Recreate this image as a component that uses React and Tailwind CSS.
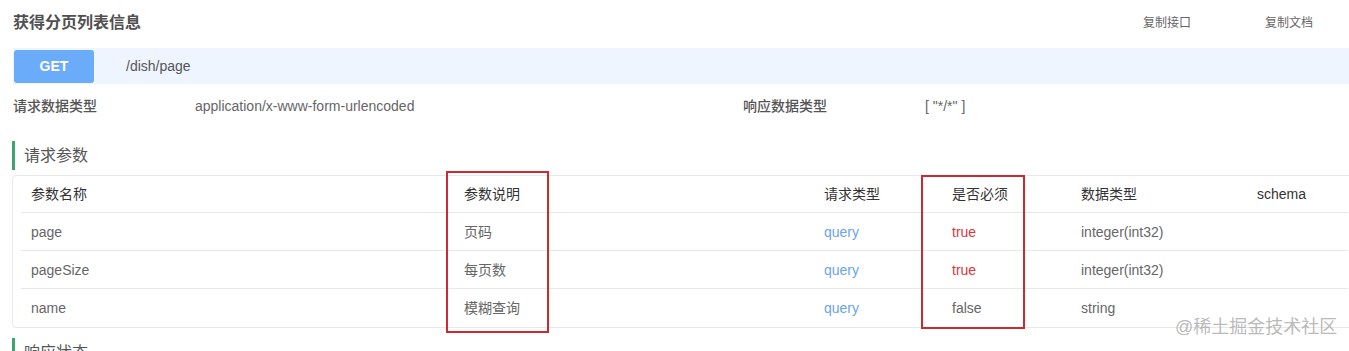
import React from 'react';

const params = [
  { name: 'page', desc: '页码', in: 'query', required: true, type: 'integer(int32)' },
  { name: 'pageSize', desc: '每页数', in: 'query', required: true, type: 'integer(int32)' },
  { name: 'name', desc: '模糊查询', in: 'query', required: false, type: 'string' },
];

const cols = 'grid grid-cols-[433px_360px_128px_129px_176px_1fr] items-center';

const SectionTitle = ({ children, className = '' }) => (
  <div className={`flex items-center gap-[9px] ${className}`}>
    <div className="w-[3px] h-[29px] bg-[#3fa56f]" />
    <span className="text-[16px] text-[#555]">{children}</span>
  </div>
);

export default function App() {
  return (
    <div
      className="relative w-[1349px] h-[351px] overflow-hidden bg-white"
      style={{ fontFamily: '"Liberation Sans", "Noto Sans CJK SC", sans-serif' }}
    >
      <div className="pl-[12px]">
        {/* Title row */}
        <div className="h-[48px] flex items-center pl-px pb-[2px]">
          <h1 className="text-[16px] font-bold text-[#505050]">获得分页列表信息</h1>
          <div className="ml-auto mr-[36px] flex gap-[74px] text-[12px] text-[#666]">
            <span>复制接口</span>
            <span>复制文档</span>
          </div>
        </div>

        {/* Method bar */}
        <div className="h-[36px] ml-px bg-[#eef5fe] flex items-center pl-px">
          <div className="w-[80px] h-[33px] mt-[1px] rounded-[3px] bg-[#6aabfa] flex items-center justify-center text-white font-bold text-[14px]">
            GET
          </div>
          <span className="ml-[32px] text-[14px] text-[#555]">/dish/page</span>
        </div>

        {/* Content types */}
        <div className="h-[44px] pl-px grid grid-cols-[182px_548px_182px_1fr] items-center text-[14px]">
          <span className="font-medium text-[#555]">请求数据类型</span>
          <span className="text-[#666]">application/x-www-form-urlencoded</span>
          <span className="font-medium text-[#555]">响应数据类型</span>
          <span className="text-[#666]">[ "*/*" ]</span>
        </div>

        {/* Request params */}
        <SectionTitle className="mt-[13px]">请求参数</SectionTitle>
        <div className="mt-[5px] w-[1345px] border border-[#e8e8e8] rounded-[4px] px-[8px] text-[14px]">
          <div className={`${cols} h-[37px] border-b border-[#e8e8e8] text-[#333]`}>
            <span className="pl-[10px]">参数名称</span>
            <span className="pl-[10px]">参数说明</span>
            <span className="pl-[10px]">请求类型</span>
            <span className="pl-[10px]">是否必须</span>
            <span className="pl-[10px]">数据类型</span>
            <span className="pl-[10px]">schema</span>
          </div>
          {params.map((p, i) => (
            <div
              key={p.name}
              className={`${cols} h-[38px] pt-px text-[#666] ${i < params.length - 1 ? 'border-b border-[#e8e8e8]' : ''}`}
            >
              <span className="pl-[10px]">{p.name}</span>
              <span className="pl-[10px]">{p.desc}</span>
              <span className="pl-[10px] text-[#6aa5e8]">{p.in}</span>
              <span className={`pl-[10px] ${p.required ? 'text-[#e0353b]' : ''}`}>
                {p.required ? 'true' : 'false'}
              </span>
              <span className="pl-[10px]">{p.type}</span>
              <span className="pl-[10px]" />
            </div>
          ))}
        </div>

        <SectionTitle className="mt-[10px]">响应状态</SectionTitle>
      </div>

      {/* Annotation boxes */}
      <div className="absolute left-[446px] top-[171px] w-[103px] h-[162px] border-2 border-[#cc2a30]" />
      <div className="absolute left-[921px] top-[175px] w-[104px] h-[154px] border-2 border-[#cc2a30]" />

      {/* Watermark */}
      <div className="absolute left-[1175px] top-[316px] text-[18px] leading-[22px] text-[#a8a8a8]/80">
        @稀土掘金技术社区
      </div>
    </div>
  );
}
